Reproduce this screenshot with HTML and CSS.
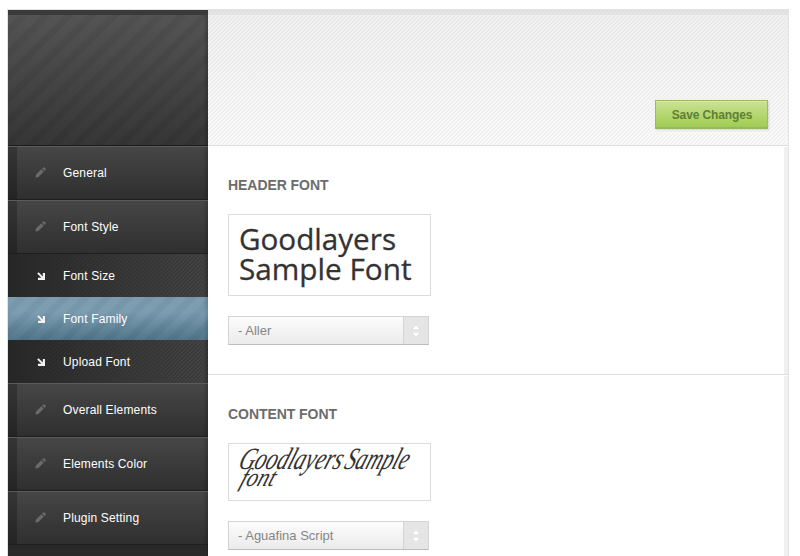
FILE: index.html
```html
<!DOCTYPE html>
<html lang="en">
<head>
<meta charset="utf-8">
<title>Font Family</title>
<link rel="stylesheet" href="styles.css">
</head>
<body>
<svg class="defs" width="0" height="0">
  <symbol id="pencil" viewBox="0 0 11 11"><path d="M.4 10.6l.6-3L6.3 2.3l2.4 2.4-5.3 5.3zM7 1.6L8.3.4q.6-.5 1.2 0l1.1 1.1q.5.6 0 1.2L9.4 4z"/></symbol>
  <symbol id="arrow" viewBox="0 0 8 8"><path d="M.2 1.6L1.6.2 5.8 4.4V1H8v7H1V5.8h3.4z"/></symbol>
  <symbol id="updown" viewBox="0 0 10 14"><path d="M1 5.5L5 1l4 4.5zM1 8.5h8L5 13z"/></symbol>
</svg>
<div class="panel">
  <aside class="sidebar">
    <div class="brand"></div>
    <nav>
      <a class="item"><svg class="pencil"><use href="#pencil"/></svg>General</a>
      <a class="item"><svg class="pencil"><use href="#pencil"/></svg>Font Style</a>
      <a class="sub"><svg class="arrow"><use href="#arrow"/></svg>Font Size</a>
      <a class="sub active"><svg class="arrow"><use href="#arrow"/></svg>Font Family</a>
      <a class="sub"><svg class="arrow"><use href="#arrow"/></svg>Upload Font</a>
      <a class="item"><svg class="pencil"><use href="#pencil"/></svg>Overall Elements</a>
      <a class="item"><svg class="pencil"><use href="#pencil"/></svg>Elements Color</a>
      <a class="item"><svg class="pencil"><use href="#pencil"/></svg>Plugin Setting</a>
    </nav>
  </aside>
  <main class="main">
    <header class="top"><button class="save">Save Changes</button></header>
    <section class="option">
      <h2>HEADER FONT</h2>
      <div class="sample">
        <svg class="sample-text" width="201" height="80">
          <text class="aller" x="10" y="34.5" textLength="157" lengthAdjust="spacingAndGlyphs">Goodlayers</text>
          <text class="aller" x="10" y="64.5" textLength="172.5" lengthAdjust="spacingAndGlyphs">Sample Font</text>
        </svg>
      </div>
      <div class="select"><span>- Aller</span><i><svg><use href="#updown"/></svg></i></div>
    </section>
    <section class="option last">
      <h2>CONTENT FONT</h2>
      <div class="sample short">
        <svg class="sample-text" width="201" height="56">
          <g transform="skewX(-20)">
            <text class="script" x="17" y="25" textLength="103" lengthAdjust="spacingAndGlyphs">Goodlayers</text>
            <text class="script" x="123" y="25" textLength="63" lengthAdjust="spacingAndGlyphs">Sample</text>
            <text class="script small" x="25" y="42" textLength="34" lengthAdjust="spacingAndGlyphs">font</text>
          </g>
        </svg>
      </div>
      <div class="select"><span>- Aguafina Script</span><i><svg><use href="#updown"/></svg></i></div>
    </section>
  </main>
</div>
</body>
</html>
```
FILE: styles.css
```css
* { box-sizing: border-box; }
html, body { height: 556px; overflow: hidden; }
body { margin: 0; background: #fff; font-family: "Liberation Sans", Arial, sans-serif; }
.defs { display: block; }
.panel {
  display: flex;
  width: 782px;
  height: 547px;
  margin: 9px 0 0 7px;
  border: 1px solid #e3e3e3;
  border-bottom: 0;
}
.sidebar {
  width: 200px;
  background: #292929;
  box-shadow: inset -1px 0 #222;
}
.brand {
  height: 136px;
  border-top: 5px solid #3a3a3a;
  border-bottom: 1px solid #1c1c1c;
  background:
    linear-gradient(90deg, transparent 195px, rgba(0,0,0,.22)),
    repeating-linear-gradient(135deg, rgba(255,255,255,.01) 0 7px, rgba(0,0,0,.035) 9px 14px, rgba(255,255,255,.01) 16px),
    linear-gradient(#525252, #343434);
}
.item, .sub {
  display: flex;
  align-items: center;
  color: #fff;
  font-size: 12px;
  letter-spacing: .16px;
}
.item {
  height: 54px;
  border-top: 1px solid #5b5b5b;
  border-bottom: 1px solid #1e1e1e;
  background:
    linear-gradient(90deg, rgba(0,0,0,.24) 9px, transparent 9px 195px, rgba(0,0,0,.2)),
    linear-gradient(#464646, #2f2f2f);
}
.pencil { width: 11px; height: 11px; margin: -2px 17px 0 27px; fill: #6a6a6a; }
.arrow { width: 8px; height: 8px; margin: 0 18px 0 29px; fill: #f2f2f2; }
.sub {
  height: 43px;
  background:
    linear-gradient(90deg, transparent 195px, rgba(0,0,0,.25)),
    repeating-linear-gradient(135deg, rgba(0,0,0,.12) 0 1.414px, transparent 1.414px 2.828px),
    linear-gradient(90deg, #292929, #444);
}
.sub.active {
  background:
    linear-gradient(90deg, transparent 195px, rgba(0,0,0,.15)),
    repeating-linear-gradient(135deg, rgba(255,255,255,.02) 0 6px, rgba(0,0,0,.03) 8px 13px, rgba(255,255,255,.02) 15px),
    linear-gradient(#7a9aad, #7a9cb0 35%, #4f7389);
}
.main { width: 580px; }
.top {
  display: flex;
  justify-content: flex-end;
  align-items: flex-end;
  height: 136px;
  padding: 0 20px 16px 0;
  border-bottom: 1px solid #dedede;
  background:
    linear-gradient(rgba(0,0,0,.045), rgba(0,0,0,.045)) top / 100% 5px no-repeat,
    repeating-linear-gradient(135deg, rgba(0,0,0,.035) 0 1.414px, transparent 1.414px 2.828px),
    linear-gradient(#f0f0f0, #fafafa);
}
.save {
  width: 113px;
  height: 29px;
  padding: 1px 0 0 1px;
  border: 1px solid #9abb6b;
  border-bottom: 2px solid #93b763;
  background: linear-gradient(#cbe293, #a0cc52);
  box-shadow: inset 0 1px #d5e8a7, 1px 1px 2px rgba(0,0,0,.13);
  color: #5f7f33;
  font: bold 12px "Liberation Sans", Arial, sans-serif;
  letter-spacing: -.12px;
}
.option {
  height: 229px;
  padding: 30px 20px 0;
  border-bottom: 1px solid #dedede;
  background: linear-gradient(#f0f0f0, #f0f0f0) right 1px / 4px 100% no-repeat;
}
.option.last { height: 182px; border-bottom: 0; }
h2 {
  height: 18px;
  margin: 0 0 20px;
  color: #6c6c6c;
  font-size: 14px;
  line-height: 18px;
  letter-spacing: -.06px;
}
.sample {
  width: 203px;
  height: 82px;
  margin-bottom: 20px;
  border: 1px solid #dcdcdc;
}
.sample.short { height: 58px; }
.sample-text { display: block; overflow: visible; fill: #333; }
.aller { font: 30px "Open Sans", sans-serif; stroke: #333; stroke-width: .3px; }
.script { font: italic 31px "Liberation Serif", serif; }
.script.small { font-size: 26px; }
.select {
  display: flex;
  justify-content: space-between;
  width: 201px;
  height: 29px;
  border: 1px solid #d4d4d4;
  border-bottom-color: #bcbcbc;
  background: linear-gradient(#fcfcfc, #ebebeb);
  color: #858585;
  font-size: 13px;
  line-height: 28px;
}
.select span { padding-left: 9px; }
.select i {
  display: flex;
  justify-content: center;
  align-items: center;
  width: 25px;
  border-left: 1px solid #d4d4d4;
  background: #e5e5e5;
}
.select svg { width: 10px; height: 14px; overflow: visible; fill: #fff; stroke: #cfcfcf; stroke-width: 1; paint-order: stroke; }
```
